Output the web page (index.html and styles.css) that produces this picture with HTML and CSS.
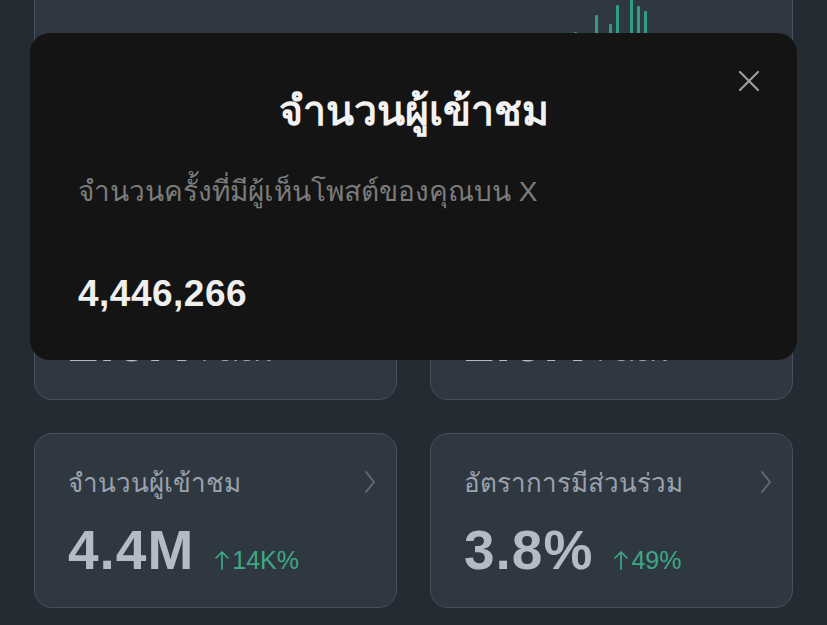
FILE: index.html
```html
<!DOCTYPE html>
<html lang="th">
<head>
  <meta charset="UTF-8" />
  <meta name="viewport" content="width=device-width, initial-scale=1.0"/>
  <title>จำนวนผู้เข้าชม</title>
  <link rel="stylesheet" href="styles.css">
</head>
<body>

  <!-- Dashboard behind the sheet -->
  <div class="grid">
    <div class="card card-wide">
      <div class="chart">
        <span class="bar" style="height: 29px"></span>
        <span class="bar" style="height: 0"></span>
        <span class="bar" style="height: 0"></span>
        <span class="bar" style="height: 46px"></span>
        <span class="bar" style="height: 0"></span>
        <span class="bar" style="height: 37px"></span>
        <span class="bar" style="height: 56px"></span>
        <span class="bar" style="height: 0"></span>
        <span class="bar" style="height: 62px"></span>
        <span class="bar" style="height: 55px"></span>
        <span class="bar" style="height: 50px"></span>
      </div>
    </div>

    <div class="card">
      <div class="card-head"><span class="label">การโพสต์</span></div>
      <div class="value-row"><span class="value">2.6K</span><span class="total">/ 3.3K</span></div>
    </div>
    <div class="card">
      <div class="card-head"><span class="label">การตอบกลับ</span></div>
      <div class="value-row"><span class="value">2.6K</span><span class="total">/ 3.3K</span></div>
    </div>

    <div class="card">
      <div class="card-head">
        <span class="label">จำนวนผู้เข้าชม</span>
        <svg class="chev" viewBox="0 0 12 24" width="12" height="24"><path d="M2 2 L10 12 L2 22" fill="none" stroke="currentColor" stroke-width="1.8" stroke-linecap="round" stroke-linejoin="round"/></svg>
      </div>
      <div class="value-row">
        <span class="value">4.4M</span>
        <span class="delta"><svg class="up" viewBox="0 0 14 20" width="14" height="20"><path d="M7 19 V2 M1 8 L7 2 L13 8" fill="none" stroke="currentColor" stroke-width="1.7" stroke-linecap="round" stroke-linejoin="round"/></svg>14K%</span>
      </div>
    </div>
    <div class="card">
      <div class="card-head">
        <span class="label">อัตราการมีส่วนร่วม</span>
        <svg class="chev" viewBox="0 0 12 24" width="12" height="24"><path d="M2 2 L10 12 L2 22" fill="none" stroke="currentColor" stroke-width="1.8" stroke-linecap="round" stroke-linejoin="round"/></svg>
      </div>
      <div class="value-row">
        <span class="value">3.8%</span>
        <span class="delta"><svg class="up" viewBox="0 0 14 20" width="14" height="20"><path d="M7 19 V2 M1 8 L7 2 L13 8" fill="none" stroke="currentColor" stroke-width="1.7" stroke-linecap="round" stroke-linejoin="round"/></svg>49%</span>
      </div>
    </div>
  </div>

  <!-- Info sheet -->
  <div class="sheet">
    <button class="close" aria-label="ปิด">
      <svg viewBox="0 0 24 24" width="24" height="24"><path d="M3 3 L21 21 M21 3 L3 21" stroke="currentColor" stroke-width="2.2" stroke-linecap="round"/></svg>
    </button>
    <h1>จำนวนผู้เข้าชม</h1>
    <p class="desc">จำนวนครั้งที่มีผู้เห็นโพสต์ของคุณบน X</p>
    <div class="big">4,446,266</div>
  </div>

</body>
</html>
```

FILE: styles.css
```css
body {
  margin: 0;
  font-family: "Liberation Sans", "Noto Sans", sans-serif;
  background-color: #252b33;
  color: #b3bbc5;
  overflow: hidden;
}
.grid {
  display: grid;
  grid-template-columns: 1fr 1fr;
  gap: 33px;
  padding: 0 34px;
  margin-top: -58px;
}
.card {
  background: #2f3741;
  border: 1.5px solid #46505b;
  border-radius: 18px;
  height: 175px;
  box-sizing: border-box;
  padding: 28px 18px 0 33px;
}
.card-wide {
  grid-column: span 2;
  height: 250px;
  padding: 0 0 0 539px;
}
.chart {
  display: flex;
  align-items: flex-end;
  gap: 4px;
  height: 118px;
}
.bar {
  width: 3px;
  background: #2e9c86;
  border-radius: 1px;
}
.card-head {
  display: flex;
  justify-content: space-between;
  align-items: center;
  height: 40px;
}
.label {
  font-size: 26px;
  color: #9aa2ac;
}
.chev {
  color: #646c76;
  margin-right: 2px;
}
.value-row {
  display: flex;
  align-items: baseline;
  gap: 21px;
  margin-top: 16px;
}
.value {
  font-size: 55px;
  font-weight: bold;
  letter-spacing: 1px;
  color: #b3bbc5;
}
.total {
  font-size: 26px;
  color: #9aa2ac;
  margin-left: -6px;
}
.delta {
  font-size: 25px;
  color: #3ea886;
}
.up {
  width: 14px;
  height: 20px;
  margin-right: 3px;
  vertical-align: -1px;
}
.sheet {
  position: fixed;
  left: 30px;
  top: 33px;
  width: 767px;
  height: 327px;
  box-sizing: border-box;
  background: #141414;
  border-radius: 20px;
  padding: 46px 48px 0 48px;
}
.sheet h1 {
  margin: 0;
  text-align: center;
  font-size: 41px;
  font-weight: bold;
  color: #f2f2f2;
  line-height: 64px;
}
.close {
  position: absolute;
  right: 36px;
  top: 36px;
  background: none;
  border: none;
  padding: 0;
  color: #9d9d9d;
  width: 24px;
  height: 24px;
  cursor: pointer;
}
.desc {
  margin: 26px 0 0;
  font-size: 28px;
  color: #7b7b7b;
}
.big {
  margin-top: 60px;
  font-size: 37px;
  font-weight: bold;
  color: #efefef;
  letter-spacing: 0.5px;
}
```
